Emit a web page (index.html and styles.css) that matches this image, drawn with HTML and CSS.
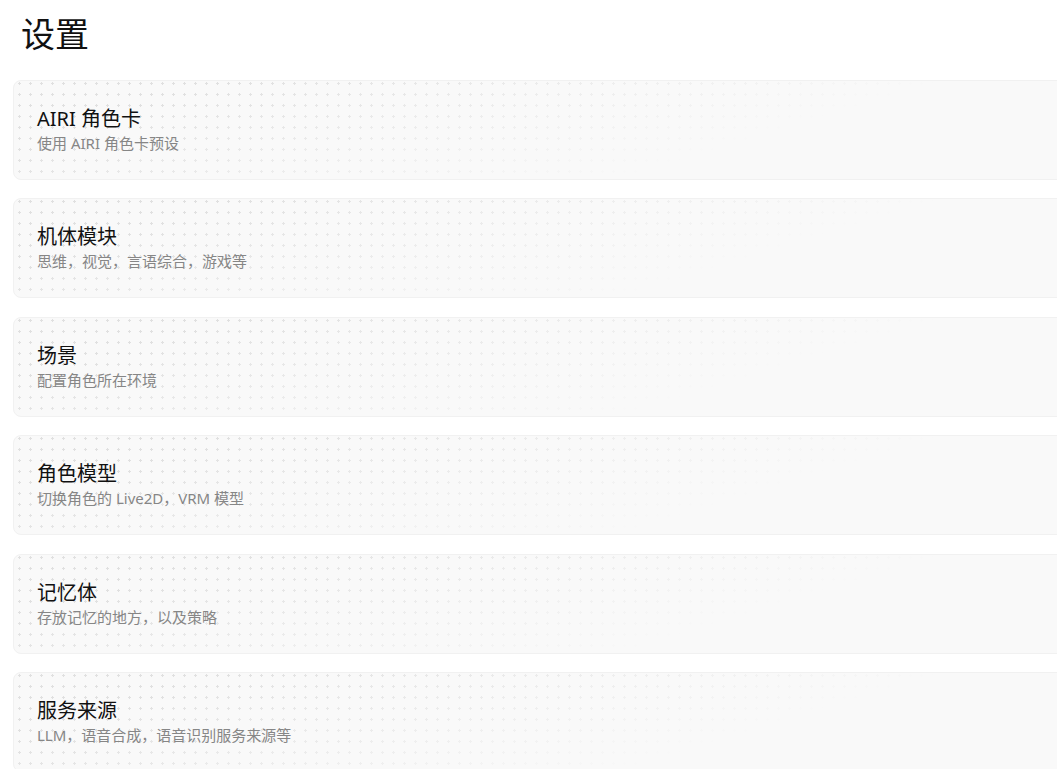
FILE: index.html
```html
<!DOCTYPE html>
<html lang="zh-CN">
<head>
  <meta charset="UTF-8">
  <title>设置</title>
  <link rel="stylesheet" href="styles.css">
</head>
<body>
  <div class="page">
    <h1 class="page-title">设置</h1>

    <div class="settings-list">
      <!-- 每个设置项 -->
      <div class="setting-card">
        <div class="setting-title">AIRI 角色卡</div>
        <div class="setting-desc">使用 AIRI 角色卡预设</div>
      </div>
      <div class="setting-card">
        <div class="setting-title">机体模块</div>
        <div class="setting-desc">思维，视觉，言语综合，游戏等</div>
      </div>
      <div class="setting-card">
        <div class="setting-title">场景</div>
        <div class="setting-desc">配置角色所在环境</div>
      </div>
      <div class="setting-card">
        <div class="setting-title">角色模型</div>
        <div class="setting-desc">切换角色的 Live2D，VRM 模型</div>
      </div>
      <div class="setting-card">
        <div class="setting-title">记忆体</div>
        <div class="setting-desc">存放记忆的地方，以及策略</div>
      </div>
      <div class="setting-card">
        <div class="setting-title">服务来源</div>
        <div class="setting-desc">LLM，语音合成，语音识别服务来源等</div>
      </div>
    </div>
  </div>
</body>
</html>
```

FILE: styles.css
```css
body {
  margin: 0;
  background: #fff;
  color: #111;
  font-family: "Noto Sans", "Noto Sans CJK SC", sans-serif;
  overflow: hidden;
}

.page {
  padding: 0 0 0 13px;
}

.page-title {
  margin: 0;
  padding: 12px 0 0 8px;
  height: 80px;
  box-sizing: border-box;
  font-size: 34px;
  font-weight: 400;
  line-height: 44px;
}

.settings-list {
  display: flex;
  flex-direction: column;
  gap: 18.4px;
  width: 1100px;
}

.setting-card {
  position: relative;
  height: 100px;
  box-sizing: border-box;
  padding: 24px 23px;
  background: #f9f9f9;
  border: 1.5px solid #f1f1f1;
  border-radius: 8px;
  overflow: hidden;
}

/* 点阵背景，向右下渐隐 */
.setting-card::before {
  content: "";
  position: absolute;
  inset: 0;
  background-image: radial-gradient(circle, #e0e0e0 1.1px, transparent 1.4px);
  background-size: 11px 11px;
  background-position: 0 -3px;
  -webkit-mask-image: linear-gradient(163deg, #000 15%, transparent 66%);
  mask-image: linear-gradient(163deg, #000 15%, transparent 66%);
}

.setting-title,
.setting-desc {
  position: relative;
}

.setting-title {
  font-size: 20px;
  line-height: 28px;
  color: #111;
}

.setting-desc {
  font-size: 15px;
  line-height: 20px;
  color: #868686;
}
```
